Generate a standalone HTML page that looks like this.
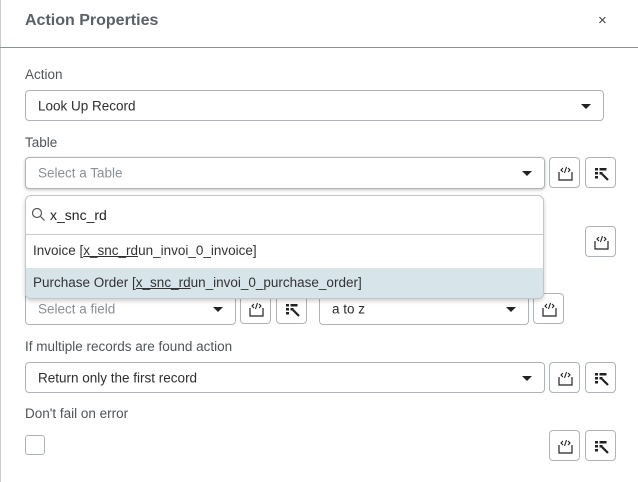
<!DOCTYPE html><html><head><style>
body{margin:0;width:638px;height:482px;background:#fff;position:relative;overflow:hidden;font-family:"Liberation Sans",sans-serif;color:#2e2e2e}
.a{position:absolute}
.lbl{position:absolute;font-size:13.5px;color:#4f5559;left:25px}
.sel{position:absolute;border:1px solid #aeb4b8;border-radius:4px;box-sizing:border-box;background:#fff;font-size:13.5px}
.sel span{position:absolute;left:12px;top:50%;transform:translateY(-50%)}
.sel i{position:absolute;right:12px;top:50%;margin-top:-2px;width:0;height:0;border-left:5px solid transparent;border-right:5px solid transparent;border-top:5px solid #222}
.ph{color:#8a9096}
.b{position:absolute;width:31px;height:31px;border:1px solid #aeb4b8;border-radius:4px;box-sizing:border-box;background:#fff}
.b svg{position:absolute;left:8px;top:8px}
</style></head><body>
<div class="a" style="left:0;top:0;width:1px;height:482px;background:#c8cccf"></div>
<div class="a" style="left:25px;top:12px;font-size:16px;font-weight:bold;color:#5a6066">Action Properties</div>
<div class="a" style="left:598px;top:12px;font-size:15px;color:#444">×</div>
<div class="a" style="left:0;top:47px;width:638px;height:1px;background:#8c9296"></div>

<div class="lbl" style="top:67px">Action</div>
<div class="sel" style="left:25px;top:90px;width:579px;height:31px"><span>Look Up Record</span><i></i></div>

<div class="lbl" style="top:135px">Table</div>
<div class="sel" style="left:25px;top:157px;width:520px;height:32px;box-shadow:0 1px 3px rgba(0,0,0,.25)"><span class="ph">Select a Table</span><i></i></div>

<svg width="0" height="0" style="position:absolute"><defs>
<symbol id="c" viewBox="0 0 15 15"><path d="M1 6v8h13V6" fill="none" stroke="#222" stroke-width="1.2"/><path d="M5 2L3 4l2 2M10 2l2 2-2 2M8.5 1L6.5 7" fill="none" stroke="#222" stroke-width="1.1"/></symbol>
<symbol id="w" viewBox="0 0 15 15"><rect x="1" y="2" width="3" height="2.5" fill="#222"/><rect x="5.5" y="2" width="7" height="2.5" fill="#222"/><rect x="1" y="6" width="3" height="2.5" fill="#222"/><rect x="5.5" y="6" width="3" height="2.5" fill="#222"/><rect x="1" y="10" width="3" height="2.5" fill="#222"/><path d="M8 8l6 6" stroke="#222" stroke-width="2.2"/></symbol>
</defs></svg>

<div class="b" style="left:549px;top:157px"><svg width="15" height="15"><use href="#c"/></svg></div>
<div class="b" style="left:585px;top:157px"><svg width="15" height="15"><use href="#w"/></svg></div>

<div class="b" style="left:585px;top:226px"><svg width="15" height="15"><use href="#c"/></svg></div>

<div class="sel" style="left:25px;top:293px;width:211px;height:32px"><span class="ph">Select a field</span><i></i></div>
<div class="b" style="left:240px;top:293px"><svg width="15" height="15"><use href="#c"/></svg></div>
<div class="b" style="left:276px;top:293px"><svg width="15" height="15"><use href="#w"/></svg></div>
<div class="sel" style="left:319px;top:293px;width:210px;height:32px"><span>a to z</span><i></i></div>
<div class="b" style="left:533px;top:293px"><svg width="15" height="15"><use href="#c"/></svg></div>

<div class="a" style="left:25px;top:195px;width:519px;height:104px;border:1px solid #c3c7ca;border-radius:6px;box-sizing:border-box;background:#fff;box-shadow:0 2px 4px rgba(0,0,0,.2);overflow:hidden">
 <svg class="a" style="left:5px;top:11px" width="15" height="15"><circle cx="6" cy="6" r="4.5" fill="none" stroke="#555" stroke-width="1.2"/><path d="M9.5 9.5l4 4" stroke="#555" stroke-width="1.2"/></svg>
 <div class="a" style="left:24px;top:11px;font-size:14px;color:#222">x_snc_rd</div>
 <div class="a" style="left:0;top:38px;width:519px;height:1px;background:#c8ccce"></div>
 <div class="a" style="left:7px;top:47px;font-size:13.5px;color:#333">Invoice [<u>x_snc_rd</u>un_invoi_0_invoice]</div>
 <div class="a" style="left:0;top:72px;width:519px;height:31px;background:#d7e5ea"></div>
 <div class="a" style="left:7px;top:79px;font-size:13.5px;color:#333">Purchase Order [<u>x_snc_rd</u>un_invoi_0_purchase_order]</div>
</div>

<div class="lbl" style="top:339px">If multiple records are found action</div>
<div class="sel" style="left:25px;top:362px;width:520px;height:31px"><span>Return only the first record</span><i></i></div>
<div class="b" style="left:549px;top:362px"><svg width="15" height="15"><use href="#c"/></svg></div>
<div class="b" style="left:585px;top:362px"><svg width="15" height="15"><use href="#w"/></svg></div>

<div class="lbl" style="top:406px">Don't fail on error</div>
<div class="a" style="left:25px;top:435px;width:20px;height:20px;border:1px solid #aeb4b8;border-radius:3px;box-sizing:border-box"></div>
<div class="b" style="left:549px;top:430px"><svg width="15" height="15"><use href="#c"/></svg></div>
<div class="b" style="left:585px;top:430px"><svg width="15" height="15"><use href="#w"/></svg></div>
</body></html>
